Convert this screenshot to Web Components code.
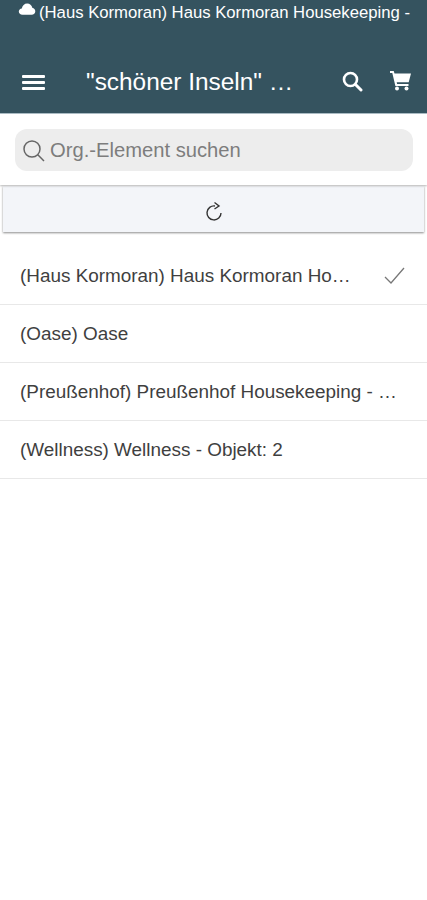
<!DOCTYPE html>
<html>
<head>
<meta charset="utf-8">
<style>
html,body{margin:0;padding:0;background:#fff;}
body{font-family:"Liberation Sans",Arial,sans-serif;width:427px;height:900px;overflow:hidden;}
</style>
</head>
<body>
<app-header title-text="&quot;schöner Inseln&quot; …" status="(Haus Kormoran) Haus Kormoran Housekeeping -"></app-header>
<search-box placeholder="Org.-Element suchen"></search-box>
<refresh-bar></refresh-bar>
<org-list>
  <org-item checked>(Haus Kormoran) Haus Kormoran Ho…</org-item>
  <org-item>(Oase) Oase</org-item>
  <org-item>(Preußenhof) Preußenhof Housekeeping - …</org-item>
  <org-item>(Wellness) Wellness - Objekt: 2</org-item>
</org-list>

<script>
//header with the status line and the toolbar
var template_header = document.createElement("template");
template_header.innerHTML = `
<style>
:host{display:block;height:113px;background:#35535f;color:#fff;border-bottom:1px solid #a9bcc4;}
.status{height:25px;display:flex;align-items:center;padding-left:18px;gap:3px;font-size:16.7px;white-space:nowrap;overflow:hidden;}
.status svg{width:18px;height:12px;flex:none;margin-top:-8px;}
.bar{height:62px;margin-top:26px;display:flex;align-items:center;}
.menu{width:23px;height:17px;margin-left:22px;flex:none;}
.title{margin-left:41px;font-size:24.4px;flex:1;white-space:nowrap;}
.search{width:21px;height:21px;flex:none;margin-right:27px;margin-bottom:1px;}
.cart{width:21px;height:21px;flex:none;margin-right:16px;margin-bottom:4px;}
</style>
<div class="status">
  <svg viewBox="0 0 17 12"><path fill="#fff" d="M4 11.800C1.800 11.800.3 10.400.3 8.600c0-1.700 1.300-3 3-3.200C3.800 2.400 6 .4 8.700.4c2.600 0 4.600 1.700 5.100 4.300 1.700.3 3 1.700 3 3.500 0 2-1.600 3.600-3.700 3.600z"/></svg>
  <span id="status"></span>
</div>
<div class="bar">
  <svg class="menu" viewBox="0 0 23 17"><g fill="#fff"><rect x="0" y="1" width="23" height="3" rx="1"/><rect x="0" y="7" width="23" height="3" rx="1"/><rect x="0" y="13" width="23" height="3" rx="1"/></g></svg>
  <span class="title" id="title"></span>
  <svg class="search" viewBox="0 0 21 21"><circle cx="8.500" cy="8.500" r="6.500" fill="none" stroke="#fff" stroke-width="2.600"/><path d="M13.500 13.500L19 19" stroke="#fff" stroke-width="3" stroke-linecap="round"/></svg>
  <svg class="cart" viewBox="0 0 21 21"><path fill="#fff" d="M0 1h3.700l.8 2.500H21l-2.300 8.700H6.700l.4 1.800h11.400v2H5.400L2.300 3H0z"/><circle cx="7" cy="18.500" r="2" fill="#fff"/><circle cx="16.500" cy="18.500" r="2" fill="#fff"/></svg>
</div>
`;
class AppHeader extends HTMLElement {
    constructor(){
        super();
        this.attachShadow({mode:"open"});
    }
    connectedCallback(){
        this.shadowRoot.appendChild(template_header.content.cloneNode(true));
        this.shadowRoot.querySelector("#status").innerText = this.getAttribute("status");
        this.shadowRoot.querySelector("#title").innerText = this.getAttribute("title-text");
    }
}
customElements.define("app-header", AppHeader);

//grey rounded search field
var template_search = document.createElement("template");
template_search.innerHTML = `
<style>
:host{display:block;position:relative;height:71px;padding:15px 14px 0 15px;box-sizing:border-box;background:#fff;box-shadow:0 1px 2px #b5b5b5;}
.field{height:42px;border-radius:12px;background:#ededed;display:flex;align-items:center;padding-left:7px;color:#7d7d7d;font-size:20.2px;gap:5px;}
svg{width:23px;height:23px;flex:none;}
</style>
<div class="field">
  <svg viewBox="0 0 23 23"><circle cx="10" cy="10" r="8" fill="none" stroke="#666" stroke-width="1.500"/><path d="M15.800 15.800L22 22" stroke="#666" stroke-width="1.500"/></svg>
  <span id="ph"></span>
</div>
`;
class SearchBox extends HTMLElement {
    constructor(){
        super();
        this.attachShadow({mode:"open"});
    }
    connectedCallback(){
        this.shadowRoot.appendChild(template_search.content.cloneNode(true));
        this.shadowRoot.querySelector("#ph").innerText = this.getAttribute("placeholder");
    }
}
customElements.define("search-box", SearchBox);

//refresh strip
var template_refresh = document.createElement("template");
template_refresh.innerHTML = `
<style>
:host{display:flex;align-items:center;justify-content:center;height:46px;margin:1px 3px 0;background:#f3f5f9;box-shadow:0 1px 2px #8d8d8d;}
svg{width:20px;height:22px;margin-top:5px;}
</style>
<svg viewBox="0 0 20 22"><path d="M17 12a7 7 0 1 1-6-7" fill="none" stroke="#333" stroke-width="1.400"/><path d="M10.500 1.500L15 5l-4.500 3" fill="none" stroke="#333" stroke-width="1.400"/></svg>
`;
class RefreshBar extends HTMLElement {
    constructor(){
        super();
        this.attachShadow({mode:"open"});
        this.shadowRoot.appendChild(template_refresh.content.cloneNode(true));
    }
}
customElements.define("refresh-bar", RefreshBar);

//list wrapper
var template_list = document.createElement("template");
template_list.innerHTML = `
<style>
:host{display:block;margin-top:15px;background:#fff;}
</style>
<slot></slot>
`;
class OrgList extends HTMLElement {
    constructor(){
        super();
        this.attachShadow({mode:"open"});
        this.shadowRoot.appendChild(template_list.content.cloneNode(true));
    }
}
customElements.define("org-list", OrgList);

//one row of the list
var template_item = document.createElement("template");
template_item.innerHTML = `
<style>
:host{display:flex;align-items:center;height:57px;border-bottom:1px solid #e8e8e8;padding-left:20px;padding-right:22px;font-size:18.9px;color:#3f3f3f;white-space:nowrap;}
.txt{flex:1;}
svg{width:21px;height:18px;flex:none;display:none;}
:host([checked]) svg{display:block;}
</style>
<span class="txt"><slot></slot></span>
<svg viewBox="0 0 21 18"><path d="M1 10l6 6L20 1" fill="none" stroke="#777" stroke-width="1.300"/></svg>
`;
class OrgItem extends HTMLElement {
    constructor(){
        super();
        this.attachShadow({mode:"open"});
        this.shadowRoot.appendChild(template_item.content.cloneNode(true));
    }
}
customElements.define("org-item", OrgItem);
</script>
</body>
</html>
